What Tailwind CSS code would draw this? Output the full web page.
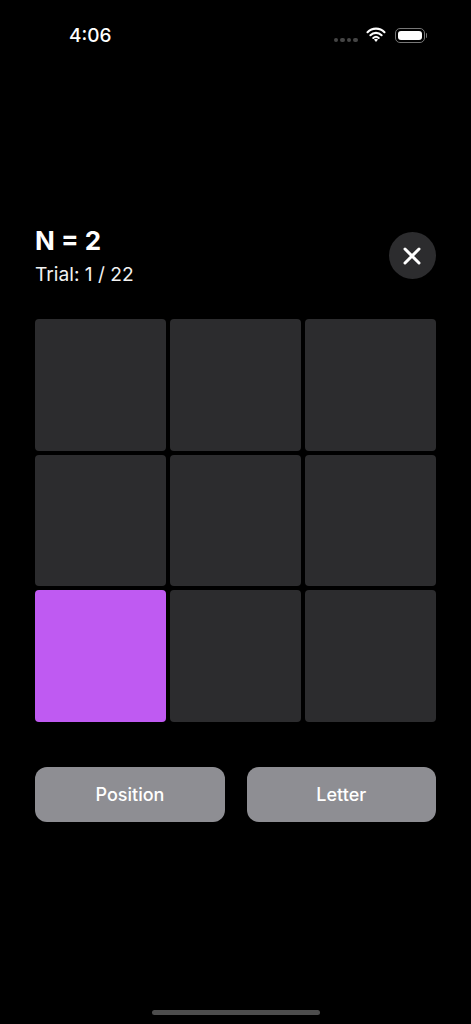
<!DOCTYPE html>
<html>
<head>
<meta charset="utf-8">
<script src="https://cdn.jsdelivr.net/npm/@tailwindcss/browser@4"></script>
</head>
<body class="bg-black">
<div class="w-[471px] h-[1024px] bg-black text-white font-['Inter',sans-serif] flex flex-col overflow-hidden">
  <div class="h-[70px] shrink-0 flex items-start justify-between pt-[25px] pl-[69px] pr-[44px]">
    <span class="text-[19px] leading-[22px] font-medium">4:06</span>
    <div class="flex items-center gap-[9px] h-[20px]">
      <div class="flex gap-[2px] mt-[10px] mr-[-1px]">
        <span class="w-[4.5px] h-[4.5px] rounded-full bg-[#454545]"></span>
        <span class="w-[4.5px] h-[4.5px] rounded-full bg-[#454545]"></span>
        <span class="w-[4.5px] h-[4.5px] rounded-full bg-[#454545]"></span>
        <span class="w-[4.5px] h-[4.5px] rounded-full bg-[#454545]"></span>
      </div>
      <svg width="20" height="15" viewBox="0 0 20 15" class="mb-[1px]">
        <path d="M1.5 5.2a12 12 0 0 1 17 0M4.4 8.2a8 8 0 0 1 11.2 0M7.3 11a4 4 0 0 1 5.4 0" fill="none" stroke="#fff" stroke-width="2.1" stroke-linecap="round"/>
        <path d="M10 15l-2-2.4a3 3 0 0 1 4 0z" fill="#fff"/>
      </svg>
      <div class="flex items-center gap-[1px]">
        <div class="w-[30px] h-[15px] rounded-[5px] border border-[#777] p-[2px]">
          <div class="w-full h-full rounded-[3px] bg-white"></div>
        </div>
        <div class="w-[1.5px] h-[5px] rounded-r-full bg-[#777]"></div>
      </div>
    </div>
  </div>
  <div class="mt-[153px] ml-[35px] w-[401px] flex items-center justify-between h-[64px]">
    <div>
      <div class="text-[26px] leading-[32px] font-bold">N = 2</div>
      <div class="text-[19.2px] leading-[24px] mt-[5px] text-[#f2f2f2]">Trial: 1 / 22</div>
    </div>
    <button class="w-[47px] h-[47px] rounded-full bg-[#2c2c2e] flex items-center justify-center mt-[1px]">
      <svg width="18" height="18" viewBox="0 0 18 18" class="ml-[-1px]"><path d="M2 2l14 14M16 2L2 16" stroke="#fff" stroke-width="3" stroke-linecap="round"/></svg>
    </button>
  </div>
  <div class="mt-[32px] ml-[35px] w-[401px] grid grid-cols-3 gap-[4px]">
    <div class="h-[131.5px] rounded-[4px] bg-[#2c2c2e]"></div>
    <div class="h-[131.5px] rounded-[4px] bg-[#2c2c2e]"></div>
    <div class="h-[131.5px] rounded-[4px] bg-[#2c2c2e]"></div>
    <div class="h-[131.5px] rounded-[4px] bg-[#2c2c2e]"></div>
    <div class="h-[131.5px] rounded-[4px] bg-[#2c2c2e]"></div>
    <div class="h-[131.5px] rounded-[4px] bg-[#2c2c2e]"></div>
    <div class="h-[131.5px] rounded-[4px] bg-[#bf5af2]"></div>
    <div class="h-[131.5px] rounded-[4px] bg-[#2c2c2e]"></div>
    <div class="h-[131.5px] rounded-[4px] bg-[#2c2c2e]"></div>
  </div>
  <div class="mt-[45px] ml-[35px] w-[401px] flex justify-between">
    <button class="w-[190px] h-[55.5px] pt-[1px] rounded-[12px] bg-[#8e8e93] text-[18px] font-medium text-white">Position</button>
    <button class="w-[189.5px] h-[55.5px] pt-[1px] rounded-[12px] bg-[#8e8e93] text-[18px] font-medium text-white">Letter</button>
  </div>
  <div class="mt-auto mb-[9px] mx-auto w-[168px] h-[5px] rounded-full bg-[#4d4d4d]"></div>
</div>
</body>
</html>
